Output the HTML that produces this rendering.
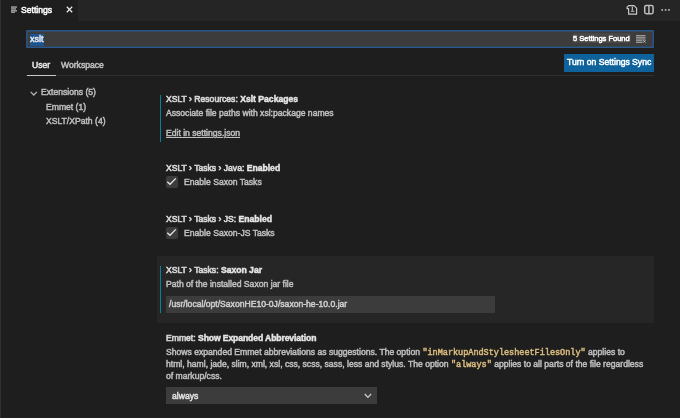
<!DOCTYPE html>
<html><head><meta charset="utf-8">
<style>
*{margin:0;padding:0;box-sizing:border-box}
html,body{width:680px;height:418px;overflow:hidden;background:#1e1e1e}
body{position:relative;-webkit-font-smoothing:antialiased;font-family:"Liberation Sans",sans-serif;font-size:8.6px;color:#cccccc;line-height:10px}
.a{position:absolute;white-space:pre;will-change:transform;-webkit-text-stroke:0.5px currentColor}
.mono{font-family:"Liberation Mono",monospace;font-size:8.5px;color:#d7ba7d}
.cat{color:#d4d4d4;-webkit-text-stroke:0.65px #d4d4d4}
.lbl{color:#e7e7e7;font-weight:bold;-webkit-text-stroke:0.45px #e7e7e7}
.desc{color:#bdbdbd}
</style></head><body>
<!-- tab bar -->
<div class="a" style="left:0;top:0;width:680px;height:21px;background:#252526"></div>
<div class="a" style="left:0;top:0;width:78.3px;height:21px;background:#1e1e1e"></div>
<div class="a" style="left:0;top:0;width:1px;height:418px;background:#313131"></div>
<!-- settings icon -->
<svg class="a" style="left:11px;top:6px" width="7" height="7" viewBox="0 0 7 7"><g fill="#b0b0b0"><rect x="0" y="0.4" width="6" height="1.3"/><rect x="0" y="2.3" width="5" height="1.3"/><rect x="0" y="4.2" width="6" height="1.3"/><rect x="0" y="5.6" width="4" height="1.2"/></g></svg>
<div class="a" style="left:21px;top:5.1px;color:#ffffff">Settings</div>
<svg class="a" style="left:65.5px;top:6.2px" width="7" height="7" viewBox="0 0 7 7"><path d="M0.8 0.8L6.2 6.2M6.2 0.8L0.8 6.2" stroke="#e6e6e6" stroke-width="1.3"/></svg>
<!-- right icons -->
<svg class="a" style="left:626px;top:4px" width="12" height="12" viewBox="0 0 12 12"><path d="M2.6 10.2V4.7H1.1V3.2L2.7 1.6H8L10.6 4.1V10.2Z" fill="none" stroke="#c8c8c8" stroke-width="1.2" stroke-linejoin="round"/><path d="M6.3 2.6V6.4M4.9 7.2H8.3" fill="none" stroke="#c8c8c8" stroke-width="1.1"/></svg>
<svg class="a" style="left:643px;top:4px" width="12" height="11" viewBox="0 0 12 11"><rect x="1.7" y="1.6" width="8.4" height="8.1" rx="1.6" fill="none" stroke="#bdbdbd" stroke-width="1.5"/><path d="M5.9 1.5v8.3" stroke="#bdbdbd" stroke-width="1.5"/></svg>
<svg class="a" style="left:660px;top:8px" width="11" height="4" viewBox="0 0 11 4"><g fill="#bdbdbd"><circle cx="2.2" cy="1.9" r="0.95"/><circle cx="5.6" cy="1.9" r="0.95"/><circle cx="8.9" cy="1.9" r="0.95"/></g></svg>

<!-- search -->
<svg class="a" style="left:0;top:0" width="680" height="60"><rect x="26.8" y="30.8" width="626.4" height="16.5" fill="#3c3c3c" stroke="#2862a2" stroke-width="1.15"/></svg>
<div class="a" style="left:30px;top:33.5px;width:14px;height:11.5px;background:#1c5493"></div>
<div class="a" style="left:30px;top:34px;color:#e8e8e8;font-size:9px">xslt</div>
<div class="a" style="left:571.5px;top:33.3px;width:59px;height:10px;background:#474747;border-radius:2.5px"></div>
<div class="a" style="left:573px;top:33.6px;color:#ffffff;font-size:7.5px">5 Settings Found</div>
<svg class="a" style="left:636px;top:35px" width="10" height="8" viewBox="0 0 10 8"><g fill="#9a9a9a"><rect x="0" y="0" width="9.5" height="1.2"/><rect x="0" y="1.7" width="9.5" height="1.2"/><rect x="0" y="3.4" width="9.5" height="1.2"/><rect x="0" y="5.1" width="6.5" height="1.2"/><rect x="0" y="6.8" width="6.5" height="1.2"/></g><path d="M7.3 5.2l2.2 2.4M9.5 5.2L7.3 7.6" stroke="#d0d0d0" stroke-width="0.9"/></svg>

<!-- tabs -->
<div class="a" style="left:32px;top:60.4px;color:#e7e7e7">User</div>
<div class="a" style="left:60.5px;top:60.4px;color:#bfbfbf">Workspace</div>
<div class="a" style="left:26px;top:75.4px;width:628px;height:1.2px;background:#2f2f2f"></div>
<div class="a" style="left:27px;top:75px;width:29px;height:1.4px;background:#c8c8c8"></div>
<div class="a" style="left:564px;top:53.5px;width:90px;height:18.2px;background:#0e639c"></div>
<div class="a" style="left:567px;top:57.4px;color:#ffffff">Turn on Settings Sync</div>

<!-- toc -->
<svg class="a" style="left:30px;top:90.8px" width="8" height="5" viewBox="0 0 8 5"><path d="M0.7 0.9L3.8 4L6.9 0.9" fill="none" stroke="#b5b5b5" stroke-width="1.25"/></svg>
<div class="a" style="left:41px;top:87.3px;color:#bcbcbc">Extensions (5)</div>
<div class="a" style="left:46px;top:101.9px;color:#bcbcbc">Emmet (1)</div>
<div class="a" style="left:46px;top:116.4px;color:#bcbcbc">XSLT/XPath (4)</div>

<!-- setting 1 -->
<div class="a" style="left:160px;top:95px;width:1.4px;height:47px;background:#0c7d9d"></div>
<div class="a" style="left:166px;top:93.7px"><span class="cat">XSLT › Resources: </span><span class="lbl">Xslt Packages</span></div>
<div class="a desc" style="left:166px;top:108px">Associate file paths with xsl:package names</div>
<div class="a desc" style="left:166px;top:128.3px;text-decoration:underline;text-underline-offset:0.6px">Edit in settings.json</div>

<!-- setting 2 -->
<div class="a" style="left:166px;top:163px"><span class="cat">XSLT › Tasks › Java: </span><span class="lbl">Enabled</span></div>
<div class="a" style="left:166px;top:176px;width:12px;height:12px;background:#3c3c3c;border-radius:2px"></div>
<svg class="a" style="left:166px;top:176px" width="12" height="12" viewBox="0 0 12 12"><path d="M1.3 5.7L4 8.3L9.8 2.4" fill="none" stroke="#e8e8e8" stroke-width="1.25"/></svg>
<div class="a desc" style="left:184px;top:176.7px">Enable Saxon Tasks</div>

<!-- setting 3 -->
<div class="a" style="left:166px;top:213.9px"><span class="cat">XSLT › Tasks › JS: </span><span class="lbl">Enabled</span></div>
<div class="a" style="left:166px;top:227px;width:12px;height:12px;background:#3c3c3c;border-radius:2px"></div>
<svg class="a" style="left:166px;top:227px" width="12" height="12" viewBox="0 0 12 12"><path d="M1.3 5.7L4 8.3L9.8 2.4" fill="none" stroke="#e8e8e8" stroke-width="1.25"/></svg>
<div class="a desc" style="left:184px;top:227.9px">Enable Saxon-JS Tasks</div>

<!-- setting 4 focused -->
<div class="a" style="left:157px;top:256.3px;width:497px;height:67px;background:#262626"></div>
<div class="a" style="left:160px;top:266px;width:1.4px;height:47px;background:#0c7d9d"></div>
<div class="a" style="left:166px;top:264.9px"><span class="cat">XSLT › Tasks: </span><span class="lbl">Saxon Jar</span></div>
<div class="a desc" style="left:166px;top:279.2px">Path of the installed Saxon jar file</div>
<div class="a" style="left:166px;top:295.5px;width:329px;height:17px;background:#3c3c3c"></div>
<div class="a" style="left:169px;top:299px;color:#cccccc">/usr/local/opt/SaxonHE10-0J/saxon-he-10.0.jar</div>

<!-- setting 5 -->
<div class="a" style="left:166px;top:332.5px"><span class="cat">Emmet: </span><span class="lbl" style="letter-spacing:-0.1px">Show Expanded Abbreviation</span></div>
<div class="a desc" style="left:166px;top:347px">Shows expanded Emmet abbreviations as suggestions. The option <span class="mono">"inMarkupAndStylesheetFilesOnly"</span> applies to</div>
<div class="a desc" style="left:166px;top:358.8px">html, haml, jade, slim, xml, xsl, css, scss, sass, less and stylus. The option <span class="mono">"always"</span> applies to all parts of the file regardless</div>
<div class="a desc" style="left:166px;top:370.6px">of markup/css.</div>
<div class="a" style="left:166px;top:387.4px;width:210.6px;height:17.2px;background:#3c3c3c"></div>
<div class="a" style="left:172px;top:390.6px;color:#e0e0e0">always</div>
<svg class="a" style="left:364px;top:393.4px" width="8" height="6" viewBox="0 0 8 6"><path d="M0.8 1L3.9 4.4L7.1 1" fill="none" stroke="#d0d0d0" stroke-width="1.2"/></svg>
</body></html>
